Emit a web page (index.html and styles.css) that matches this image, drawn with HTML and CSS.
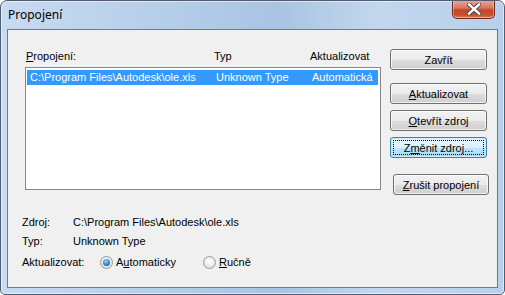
FILE: index.html
```html
<!DOCTYPE html>
<html>
<head>
<meta charset="utf-8">
<link rel="stylesheet" href="styles.css">
</head>
<body>
<div class="window">
  <div class="titlebar">
    <span class="title">Propojení</span>
    <div class="close">
      <svg width="14" height="12" viewBox="0 0 14 12">
        <path d="M2 1.5 L12 10.5 M12 1.5 L2 10.5" stroke="#3a3f48" stroke-width="4.2" stroke-linecap="square"/>
        <path d="M2 1.5 L12 10.5 M12 1.5 L2 10.5" stroke="#ffffff" stroke-width="2.4" stroke-linecap="square"/>
      </svg>
    </div>
  </div>
  <div class="client">
    <div class="main">
      <div class="links">
        <div class="hdr"><span><u>P</u>ropojení:</span><span>Typ</span><span>Aktualizovat</span></div>
        <div class="list">
          <div class="row sel"><span>C:\Program Files\Autodesk\ole.xls</span><span>Unknown Type</span><span>Automatická</span></div>
        </div>
      </div>
      <div class="buttons">
        <button class="btn">Zavřít</button>
        <button class="btn b-upd"><span><u>A</u>ktualizovat</span></button>
        <button class="btn b-open"><span><u>O</u>tevřít zdroj</span></button>
        <button class="btn b-change focus"><span class="focusrect"><span>Z<u>m</u>ěnit zdroj...</span></span></button>
        <button class="btn b-break"><span><u>Z</u>rušit propojení</span></button>
      </div>
    </div>
    <div class="info">
      <div class="info-row"><span class="lbl">Zdroj:</span><span>C:\Program Files\Autodesk\ole.xls</span></div>
      <div class="info-row"><span class="lbl">Typ:</span><span>Unknown Type</span></div>
      <div class="upd-row">
        <span class="lbl2">Aktualizovat:</span>
        <span class="radio r1"><span class="rb on"></span><span>A<u>u</u>tomaticky</span></span>
        <span class="radio"><span class="rb"></span><span><u>R</u>učně</span></span>
      </div>
    </div>
  </div>
</div>
</body>
</html>
```

FILE: styles.css
```css
html, body {
  margin: 0;
  padding: 0;
  background: #ffffff;
}
.window {
  width: 505px;
  height: 295px;
  box-sizing: border-box;
  border: 1px solid #4f5d6e;
  border-radius: 7px 7px 5px 5px;
  background:
    linear-gradient(to right, #c7dbf1 0%, #bcd3ec 20%, #aec9e6 45%, #a8c4e2 55%, #c2d7ee 75%, #b8d0ea 100%);
  box-shadow: inset 0 0 0 1px rgba(255,255,255,0.55);
  padding: 0 6px 6px 6px;
  display: flex;
  flex-direction: column;
  overflow: hidden;
}
.titlebar {
  height: 28px;
  margin: 0 -6px;
  padding: 0 9px 0 7px;
  display: flex;
  justify-content: space-between;
  align-items: flex-start;
  flex-shrink: 0;
}
.title {
  font-family: "Noto Sans", "Open Sans", sans-serif;
  font-size: 12px;
  line-height: 16px;
  margin-top: 6px;
  color: #000000;
}
.close {
  width: 43px;
  height: 19px;
  margin-top: -1px;
  box-sizing: border-box;
  border: 1px solid #6b2a20;
  border-top: none;
  border-radius: 0 0 5px 5px;
  background: linear-gradient(#e9a99b 0%, #d8745f 45%, #c7432b 55%, #c9502f 85%, #e08a5e 100%);
  box-shadow: inset 0 0 0 1px rgba(255,255,255,0.35);
  display: flex;
  align-items: center;
  justify-content: center;
}
.client {
  flex: 1;
  border: 1px solid #6d7b8c;
  background: #f0f0f0;
  font-family: "Liberation Sans", Arial, sans-serif;
  font-size: 11px;
  color: #000000;
  padding-top: 19px;
}
.main {
  display: flex;
  padding-left: 17px;
  column-gap: 9px;
}
.links {
  width: 356px;
}
.hdr {
  height: 18px;
  line-height: 14px;
  display: grid;
  grid-template-columns: 188px 96px 1fr;
  padding-left: 1px;
}
.list {
  height: 123px;
  box-sizing: border-box;
  border: 1px solid #828790;
  background: #ffffff;
  padding: 2px 2px 0 1px;
}
.row {
  height: 15px;
  line-height: 15px;
  display: grid;
  grid-template-columns: 186px 96px 1fr;
  padding-left: 3px;
  white-space: nowrap;
}
.row.sel {
  background: #3399ff;
  color: #ffffff;
}
.buttons {
  display: flex;
  flex-direction: column;
}
.btn {
  width: 97px;
  height: 21px;
  padding: 0;
  margin: 0;
  font-family: "Liberation Sans", Arial, sans-serif;
  font-size: 11px;
  color: #000000;
  border: 1px solid #707070;
  border-radius: 3px;
  background: linear-gradient(#f2f2f2 0%, #ebebeb 50%, #dddddd 51%, #cfcfcf 100%);
  box-shadow: inset 0 0 0 1px rgba(255,255,255,0.7);
  display: flex;
  align-items: center;
  justify-content: center;
}
.b-upd { margin-top: 13px; }
.b-open { margin-top: 6px; }
.b-change { margin-top: 6px; }
.b-break { margin-top: 16px; margin-left: 3px; width: 96px; }
.btn.focus {
  border-color: #3c7fb1;
  background: linear-gradient(#eaf6fd 0%, #d9f0fc 50%, #bee6fd 51%, #a7d9f5 100%);
  box-shadow: inset 0 0 0 1px #c9ecfb;
  padding: 2px;
}
.focusrect {
  flex: 1;
  align-self: stretch;
  display: flex;
  align-items: center;
  justify-content: center;
  outline: 1px dotted #000000;
  outline-offset: -1px;
}
.info {
  margin-top: 19px;
  padding-left: 14px;
  display: flex;
  flex-direction: column;
  row-gap: 3px;
}
.info-row {
  display: grid;
  grid-template-columns: 51px auto;
  line-height: 16px;
  height: 16px;
}
.upd-row {
  margin-top: 2px;
  display: flex;
  align-items: center;
  height: 16px;
}
.lbl2 {
  width: 78px;
}
.radio {
  display: flex;
  align-items: center;
  column-gap: 3px;
}
.r1 {
  width: 103px;
}
.rb {
  width: 13px;
  height: 13px;
  box-sizing: border-box;
  border-radius: 50%;
  border: 1px solid #9a9a9a;
  background: radial-gradient(circle at 50% 40%, #ffffff 0%, #ececec 50%, #d0d0d0 100%);
  display: flex;
  align-items: center;
  justify-content: center;
}
.rb.on::after {
  content: "";
  width: 7px;
  height: 7px;
  border-radius: 50%;
  background: radial-gradient(circle at 45% 35%, #9fdcff 0%, #3a93d6 45%, #1c4f86 100%);
}
u {
  text-decoration: underline;
  text-underline-offset: 1px;
}
```
